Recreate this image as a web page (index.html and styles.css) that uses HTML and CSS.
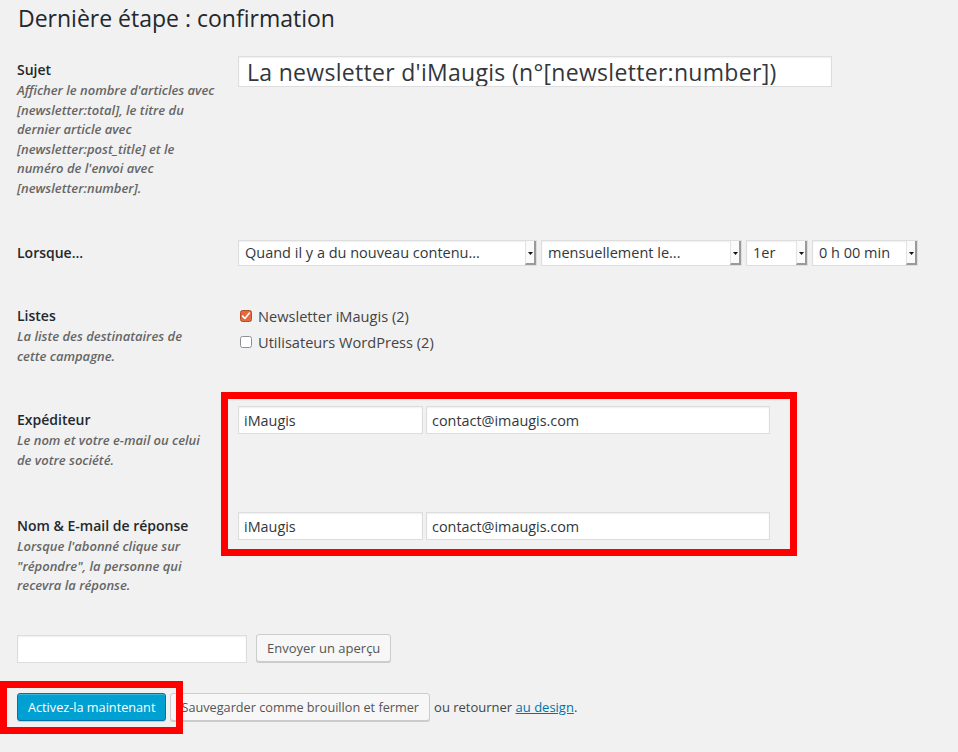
FILE: index.html
```html
<!DOCTYPE html>
<html lang="fr">
<head>
<meta charset="utf-8">
<title>Dernière étape : confirmation</title>
<link rel="stylesheet" href="styles.css">
</head>
<body>
<div class="wrap">
  <h1 class="title">Dernière étape : confirmation</h1>

  <div class="row row-subject">
    <div class="th">
      <div class="label">Sujet</div>
      <p class="desc">Afficher le nombre d'articles avec [newsletter:total], le titre du dernier article avec [newsletter:post_title] et le numéro de l'envoi avec [newsletter:number].</p>
    </div>
    <div class="td">
      <input class="input subject" type="text" value="La newsletter d'iMaugis (n°[newsletter:number])">
    </div>
  </div>

  <div class="row row-when">
    <div class="th">
      <div class="label">Lorsque...</div>
    </div>
    <div class="td selects">
      <div class="select w1"><span class="val">Quand il y a du nouveau contenu...</span><span class="arrow"><svg width="5" height="3" viewBox="0 0 5 3"><path d="M0 0h5L2.5 3z" fill="#111"/></svg></span></div>
      <div class="select w2"><span class="val">mensuellement le...</span><span class="arrow"><svg width="5" height="3" viewBox="0 0 5 3"><path d="M0 0h5L2.5 3z" fill="#111"/></svg></span></div>
      <div class="select w3"><span class="val">1er</span><span class="arrow"><svg width="5" height="3" viewBox="0 0 5 3"><path d="M0 0h5L2.5 3z" fill="#111"/></svg></span></div>
      <div class="select w4"><span class="val">0 h 00 min</span><span class="arrow"><svg width="5" height="3" viewBox="0 0 5 3"><path d="M0 0h5L2.5 3z" fill="#111"/></svg></span></div>
    </div>
  </div>

  <div class="row row-lists">
    <div class="th">
      <div class="label">Listes</div>
      <p class="desc narrow">La liste des destinataires de cette campagne.</p>
    </div>
    <div class="td">
      <label class="check">
        <svg class="cb" width="12" height="12" viewBox="0 0 12 12"><rect x="0.5" y="0.5" width="11" height="11" rx="2" fill="#e5693f" stroke="#b0512e"/><path d="M2.6 6.1l2.3 2.4 4.5-5.4" stroke="#fff" stroke-width="1.6" fill="none" stroke-linecap="round" stroke-linejoin="round"/></svg>
        <span>Newsletter iMaugis (2)</span>
      </label>
      <label class="check">
        <svg class="cb" width="12" height="12" viewBox="0 0 12 12"><rect x="0.5" y="0.5" width="11" height="11" rx="2" fill="#fff" stroke="#8c8f94"/></svg>
        <span>Utilisateurs WordPress (2)</span>
      </label>
    </div>
  </div>

  <div class="row row-from">
    <div class="th">
      <div class="label">Expéditeur</div>
      <p class="desc">Le nom et votre e-mail ou celui de votre société.</p>
    </div>
    <div class="td pair">
      <input class="input name" type="text" value="iMaugis">
      <input class="input email" type="text" value="contact@imaugis.com">
    </div>
  </div>

  <div class="row row-reply">
    <div class="th">
      <div class="label">Nom &amp; E-mail de réponse</div>
      <p class="desc">Lorsque l'abonné clique sur "répondre", la personne qui recevra la réponse.</p>
    </div>
    <div class="td pair">
      <input class="input name" type="text" value="iMaugis">
      <input class="input email" type="text" value="contact@imaugis.com">
    </div>
  </div>

  <div class="preview">
    <input class="input preview-input" type="text" value="">
    <button class="button" type="button">Envoyer un aperçu</button>
  </div>

  <div class="actions">
    <button class="button primary" type="button">Activez-la maintenant</button>
    <button class="button" type="button">Sauvegarder comme brouillon et fermer</button>
    <span class="back">ou retourner <a href="#">au design</a>.</span>
  </div>
</div>

<div class="mark mark-sender"></div>
<div class="mark mark-activate"></div>
</body>
</html>
```
FILE: styles.css
```css
html, body {
  margin: 0;
  padding: 0;
  background: #f1f1f1;
}
body {
  font-family: "Open Sans", "Noto Sans", sans-serif;
  font-size: 13px;
  color: #444;
  width: 958px;
  height: 752px;
  overflow: hidden;
  position: relative;
}
.wrap {
  padding-left: 17px;
}
.title {
  margin: 4px 0 0 1px;
  font-size: 23px;
  font-weight: 400;
  line-height: 29px;
  color: #23282d;
}
.row {
  display: grid;
  grid-template-columns: 221px 1fr;
  align-items: start;
}
.th {
  padding-top: 4px;
}
.label {
  font-size: 14px;
  font-weight: 600;
  line-height: 20px;
  color: #23282d;
}
.desc {
  margin: 1px 0 0;
  font-size: 13px;
  font-style: italic;
  font-weight: 600;
  line-height: 19.5px;
  color: #666;
  width: 200px;
}
.desc.narrow {
  width: 185px;
}
.input {
  box-sizing: border-box;
  font-family: "Open Sans", "Noto Sans", sans-serif;
  font-size: 14.4px;
  color: #32373c;
  background: #fff;
  border: 1px solid #ddd;
  box-shadow: inset 0 1px 2px rgba(0,0,0,.07);
  border-radius: 0;
  padding: 0 5px;
  margin: 0;
  height: 28px;
  outline: none;
}
.row-subject { margin-top: 23px; }
.subject {
  width: 594px;
  height: 31px;
  font-size: 23px;
  letter-spacing: 0.3px;
  padding: 0 8px;
}
.row-when { margin-top: 42px; }
.row-when .th { padding-top: 3px; }
.selects {
  display: flex;
  gap: 4px;
}
.select {
  box-sizing: border-box;
  display: flex;
  height: 26px;
  background: #fff;
  border: 1px solid #ddd;
  box-shadow: inset 0 1px 2px rgba(0,0,0,.07);
  font-size: 14.5px;
  color: #32373c;
}
.select .val {
  flex: 1;
  line-height: 24px;
  padding-left: 6px;
  white-space: nowrap;
  overflow: hidden;
}
.select .arrow {
  width: 8px;
  background: #fafafa;
  border-left: 1px solid #e2e2e2;
  border-right: 2px solid #9a9a9a;
  border-bottom: 2px solid #9a9a9a;
  display: flex;
  align-items: center;
  justify-content: center;
  padding-top: 2px;
}
.select .arrow svg { display: block; }
.w1 { width: 299px; }
.w2 { width: 201px; }
.w3 { width: 62px; }
.w4 { width: 106px; }

.row-lists { margin-top: 37px; }
.row-lists .th { padding-top: 3px; }
.check {
  display: flex;
  align-items: center;
  height: 26px;
  font-size: 14.6px;
  color: #444;
}
.check .cb {
  display: block;
  margin: 0 6px 0 2px;
}

.row-from { margin-top: 40px; }
.row-reply { margin-top: 42px; }
.pair {
  display: flex;
  gap: 3px;
}
.name { width: 185px; }
.email { width: 344px; }

.preview {
  display: flex;
  align-items: flex-start;
  gap: 9px;
  margin-top: 38px;
}
.preview-input {
  width: 230px;
  margin-top: 1px;
}
.button {
  box-sizing: border-box;
  font-family: "Open Sans", "Noto Sans", sans-serif;
  font-size: 13px;
  height: 28px;
  line-height: 26px;
  padding: 0 10px 1px;
  margin: 0;
  color: #555;
  background: #f7f7f7;
  border: 1px solid #ccc;
  border-radius: 3px;
  box-shadow: 0 1px 0 #ccc;
  white-space: nowrap;
  cursor: pointer;
}
.button.primary {
  background: #00a0d2;
  border-color: #0073aa;
  color: #fff;
  box-shadow: inset 0 1px 0 rgba(120,200,230,.5), 0 1px 0 rgba(0,0,0,.15);
}
.actions {
  display: flex;
  align-items: center;
  gap: 4px;
  margin-top: 30px;
}
.actions .button {
  font-size: 12.7px;
}
.back {
  font-size: 13px;
  color: #444;
}
.back a {
  color: #0073aa;
  text-decoration: underline;
}

.mark {
  position: absolute;
  box-sizing: border-box;
  border: 7px solid #ff0000;
  pointer-events: none;
}
.mark-sender {
  left: 221px;
  top: 392px;
  width: 576px;
  height: 164px;
}
.mark-activate {
  left: 0;
  top: 681px;
  width: 183px;
  height: 53px;
}
```
